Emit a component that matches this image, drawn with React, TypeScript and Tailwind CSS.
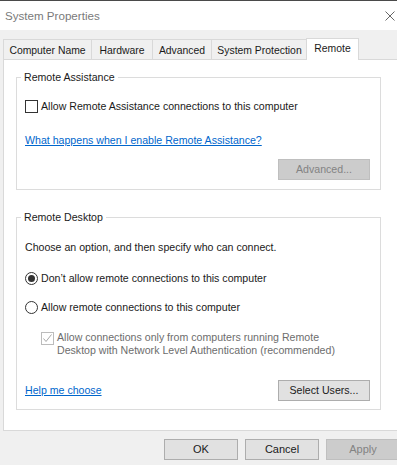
import React from 'react';

const tabs = [
  { label: 'Computer Name', w: 'w-[89px]' },
  { label: 'Hardware', w: 'w-[62px]' },
  { label: 'Advanced', w: 'w-[60px]' },
  { label: 'System Protection', w: 'w-[97px]' },
];

function Checkbox() {
  return <span className="block w-[13px] h-[13px] border border-[#333333] bg-white shrink-0" />;
}

function DisabledCheck() {
  return (
    <span className="w-[13px] h-[13px] border border-[#bcbcbc] bg-white shrink-0 flex items-center justify-center">
      <svg width="11" height="11" viewBox="0 0 11 11">
        <polyline points="1.5,5.5 4,8.5 9.5,1.5" fill="none" stroke="#a8a8a8" strokeWidth="1" />
      </svg>
    </span>
  );
}

function Radio({ checked = false }: { checked?: boolean }) {
  return (
    <span className="w-[13px] h-[13px] rounded-full border border-[#333333] bg-white shrink-0 flex items-center justify-center">
      {checked && <span className="block w-[7px] h-[7px] rounded-full bg-[#333333]" />}
    </span>
  );
}

function Button({ children, disabled = false }: { children: React.ReactNode; disabled?: boolean }) {
  return (
    <div
      className={
        disabled
          ? 'w-[92px] h-[21px] flex items-center justify-center bg-[#cccccc] border border-[#bfbfbf] text-[#838383]'
          : 'w-[92px] h-[21px] flex items-center justify-center bg-[#e1e1e1] border border-[#adadad] text-[#1a1a1a]'
      }
    >
      {children}
    </div>
  );
}

function FooterButton({ children, disabled = false }: { children: React.ReactNode; disabled?: boolean }) {
  return (
    <div
      className={
        disabled
          ? 'w-[74px] h-[21px] shrink-0 flex items-center justify-center bg-[#cccccc] border border-[#bfbfbf] text-[#838383]'
          : 'w-[74px] h-[21px] shrink-0 flex items-center justify-center bg-[#e1e1e1] border border-[#adadad] text-[#1a1a1a]'
      }
    >
      {children}
    </div>
  );
}

export default function App() {
  return (
    <div className="w-[397px] h-[465px] overflow-hidden bg-[#f0f0f0] font-['Liberation_Sans',Arial,sans-serif] text-[10.6px] leading-[13px] text-[#1a1a1a]">
      {/* title bar */}
      <div className="h-px bg-[#4a4a4a]" />
      <div className="h-[29px] bg-white flex items-center justify-between pl-[5px] pr-[1px]">
        <span className="text-[11.6px] text-[#7a7a7a]">System Properties</span>
        <svg width="10" height="10" viewBox="0 0 10 10" className="mr-[1px]">
          <path d="M0.5 0.5 L9.5 9.5 M9.5 0.5 L0.5 9.5" stroke="#666666" strokeWidth="1" />
        </svg>
      </div>

      {/* tabs */}
      <div className="flex items-end pl-[3px] mt-[7px] h-[22px] relative z-10">
        {tabs.map((t, i) => (
          <div
            key={t.label}
            className={`${t.w} h-[20px] ${i > 0 ? '-ml-px' : ''} border border-b-0 border-[#d9d9d9] bg-[#f0f0f0] flex items-center justify-center text-[10.4px] pt-px`}
          >
            {t.label}
          </div>
        ))}
        <div className="w-[53px] h-[22px] -ml-[2px] border border-b-0 border-[#d9d9d9] bg-white flex items-center justify-center text-[10.4px] pb-[2px] -mb-px">
          Remote
        </div>
      </div>

      {/* panel */}
      <div className="ml-[3px] mr-[-10px] h-[372px] bg-white border border-[#d9d9d9] pl-[12px]">
        <fieldset className="w-[365px] border border-[#dcdcdc] p-0 mt-[11px]">
          <legend className="ml-[4px] px-[3px] leading-[13px]">Remote Assistance</legend>
          <div className="pl-[8px] pr-[10px] pb-[9px]">
            <div className="flex items-center gap-[3px] mt-[16px]">
              <Checkbox />
              <span>Allow Remote Assistance connections to this computer</span>
            </div>
            <div className="mt-[21px] text-[#0066cc] underline underline-offset-[1px]">
              What happens when I enable Remote Assistance?
            </div>
            <div className="flex justify-end mt-[12px]">
              <Button disabled>Advanced...</Button>
            </div>
          </div>
        </fieldset>

        <fieldset className="w-[365px] border border-[#dcdcdc] p-0 mt-[21px]">
          <legend className="ml-[4px] px-[3px] leading-[13px]">Remote Desktop</legend>
          <div className="pl-[8px] pr-[10px] pb-[8px]">
            <div className="mt-[17px]">Choose an option, and then specify who can connect.</div>
            <div className="flex items-center gap-[3px] mt-[18px]">
              <Radio checked />
              <span>Don’t allow remote connections to this computer</span>
            </div>
            <div className="flex items-center gap-[3px] mt-[16px]">
              <Radio />
              <span>Allow remote connections to this computer</span>
            </div>
            <div className="flex items-start gap-[3px] mt-[18px] pl-[16px] text-[#6d6d6d]">
              <DisabledCheck />
              <span className="leading-[12.5px] -mt-px">
                Allow connections only from computers running Remote
                <br />
                Desktop with Network Level Authentication (recommended)
              </span>
            </div>
            <div className="flex items-center justify-between mt-[24px]">
              <span className="text-[#0066cc] underline underline-offset-[1px]">Help me choose</span>
              <Button>Select Users...</Button>
            </div>
          </div>
        </fieldset>
      </div>

      {/* footer */}
      <div className="flex gap-[7px] pl-[164px] mt-[8px] text-[11px]">
        <FooterButton>OK</FooterButton>
        <FooterButton>Cancel</FooterButton>
        <FooterButton disabled>Apply</FooterButton>
      </div>
    </div>
  );
}
